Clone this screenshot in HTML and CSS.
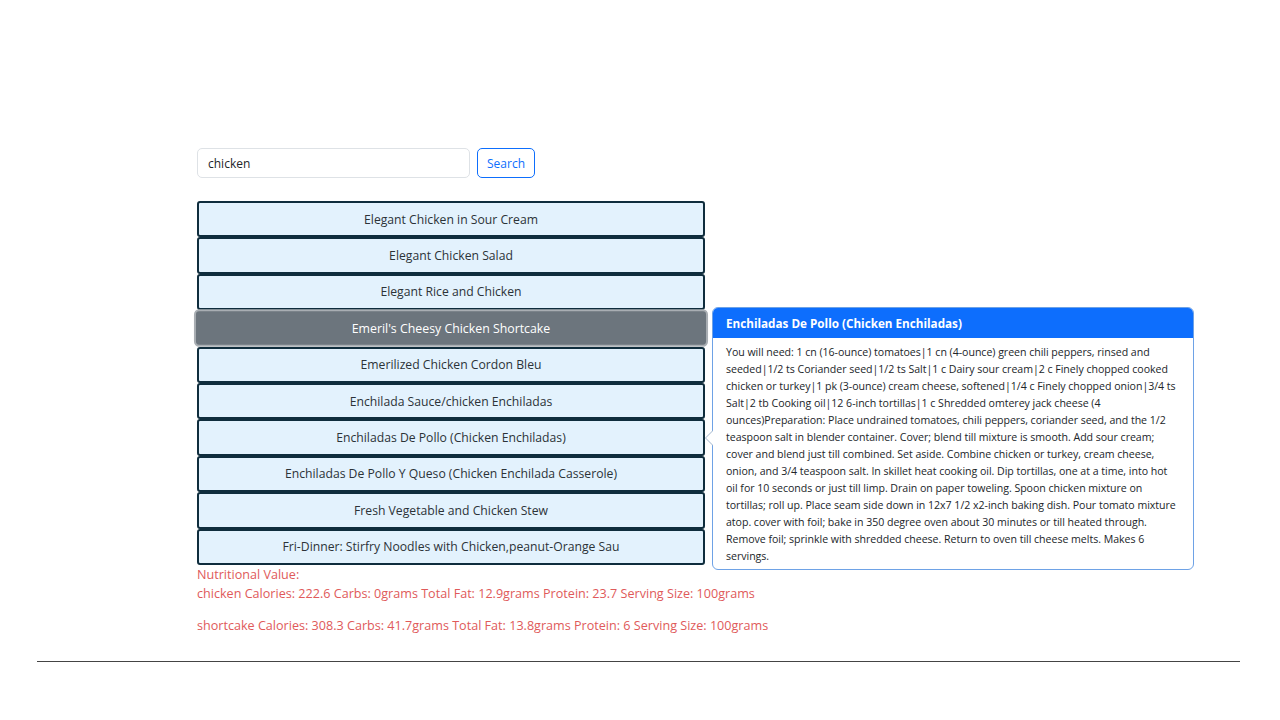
FILE: index.html
```html
<!DOCTYPE html>
<html lang="en">
<head>
<meta charset="utf-8">
<title>Recipe Search</title>
<link rel="stylesheet" href="styles.css">
</head>
<body>
<div class="page">
  <main class="main">
    <form class="search-row">
      <input class="search-input" type="text" value="chicken">
      <button class="search-btn" type="button">Search</button>
    </form>
    <div class="list-wrap">
      <ul class="recipe-list">
        <li class="recipe-item">Elegant Chicken in Sour Cream</li>
        <li class="recipe-item">Elegant Chicken Salad</li>
        <li class="recipe-item">Elegant Rice and Chicken</li>
        <li class="recipe-item active">Emeril's Cheesy Chicken Shortcake</li>
        <li class="recipe-item">Emerilized Chicken Cordon Bleu</li>
        <li class="recipe-item">Enchilada Sauce/chicken Enchiladas</li>
        <li class="recipe-item">Enchiladas De Pollo (Chicken Enchiladas)</li>
        <li class="recipe-item">Enchiladas De Pollo Y Queso (Chicken Enchilada Casserole)</li>
        <li class="recipe-item">Fresh Vegetable and Chicken Stew</li>
        <li class="recipe-item">Fri-Dinner: Stirfry Noodles with Chicken,peanut-Orange Sau</li>
      </ul>
      <div class="popover">
        <div class="popover-arrow"></div>
        <div class="popover-header">Enchiladas De Pollo (Chicken Enchiladas)</div>
        <div class="popover-body">You will need: 1 cn (16-ounce) tomatoes|1 cn (4-ounce) green chili peppers, rinsed and seeded|1/2 ts Coriander seed|1/2 ts Salt|1 c Dairy sour cream|2 c Finely chopped cooked chicken or turkey|1 pk (3-ounce) cream cheese, softened|1/4 c Finely chopped onion|3/4 ts Salt|2 tb Cooking oil|12 6-inch tortillas|1 c Shredded omterey jack cheese (4 ounces)Preparation: Place undrained tomatoes, chili peppers, coriander seed, and the 1/2 teaspoon salt in blender container. Cover; blend till mixture is smooth. Add sour cream; cover and blend just till combined. Set aside. Combine chicken or turkey, cream cheese, onion, and 3/4 teaspoon salt. In skillet heat cooking oil. Dip tortillas, one at a time, into hot oil for 10 seconds or just till limp. Drain on paper toweling. Spoon chicken mixture on tortillas; roll up. Place seam side down in 12x7 1/2 x2-inch baking dish. Pour tomato mixture atop. cover with foil; bake in 350 degree oven about 30 minutes or till heated through. Remove foil; sprinkle with shredded cheese. Return to oven till cheese melts. Makes 6 servings.</div>
      </div>
    </div>
    <div class="nutrition">
      <div class="nutrition-title">Nutritional Value:</div>
      <p class="nutrition-line">chicken Calories: 222.6 Carbs: 0grams Total Fat: 12.9grams Protein: 23.7 Serving Size: 100grams</p>
      <p class="nutrition-line">shortcake Calories: 308.3 Carbs: 41.7grams Total Fat: 13.8grams Protein: 6 Serving Size: 100grams</p>
    </div>
  </main>
  <hr class="divider">
</div>
</body>
</html>
```
FILE: styles.css
```css
* { box-sizing: border-box; }
html, body { margin: 0; padding: 0; background: #fff; }
body {
  font-family: "Open Sans", "Noto Sans", sans-serif;
  font-size: 12.2px;
  color: #212529;
}
.page { padding-top: 148px; }
.main { margin-left: 197px; width: 1000px; }

.search-row { display: flex; gap: 7px; margin: 0; }
.search-input {
  width: 273px; height: 30px;
  border: 1px solid #dee2e6; border-radius: 5px;
  padding: 0 10px;
  font: inherit; font-size: 12px; color: #212529;
  outline: none;
}
.search-btn {
  width: 58px; height: 30px;
  border: 1px solid #0d6efd; border-radius: 5px;
  background: #fff; color: #0d6efd;
  font: inherit; font-size: 12px; padding: 0;
}

.list-wrap { position: relative; margin-top: 23px; }
.recipe-list { list-style: none; margin: 0; padding: 0; width: 508px; }
.recipe-item {
  height: 36.4px;
  display: flex; align-items: center; justify-content: center;
  background: #e3f2fd;
  border: 2px solid #0f2d3d;
  border-radius: 3px;
  color: #2c3338;
  font-size: 12.2px;
}
.recipe-item.active {
  background: #6c757d;
  color: #fff;
  border-color: #a9aeb3;
  border-radius: 5px;
  transform: scale(1.012, 1.04);
  position: relative;
  z-index: 1;
}

.popover {
  position: absolute;
  left: 515px; top: 106px;
  width: 482px;
  border: 1px solid #6ea2e6;
  border-radius: 6px;
  background: #fff;
}
.popover-arrow {
  position: absolute;
  left: -8px; top: 122px;
  width: 0; height: 0;
  border-top: 8px solid transparent;
  border-bottom: 8px solid transparent;
  border-right: 8px solid #9fb4cc;
}
.popover-arrow::after {
  content: "";
  position: absolute;
  left: 1px; top: -7px;
  border-top: 7px solid transparent;
  border-bottom: 7px solid transparent;
  border-right: 7px solid #fff;
}
.popover-header {
  height: 30px;
  display: flex; align-items: center;
  padding: 0 13px;
  background: #0d6efd;
  color: #fff;
  font-weight: 700;
  font-size: 11.7px;
  border-radius: 5px 5px 0 0;
}
.popover-body {
  padding: 6px 13px 4px;
  font-size: 10.6px;
  line-height: 17px;
  color: #212529;
  letter-spacing: -0.03px;
}

.nutrition { color: #e05a5a; line-height: 19px; font-size: 12.6px; }
.nutrition-title { margin: 0; }
.nutrition-line { margin: 0 0 13px; }

.divider {
  margin: 26px 40px 0 37px;
  border: 0;
  border-top: 1.5px solid #444;
}
```
